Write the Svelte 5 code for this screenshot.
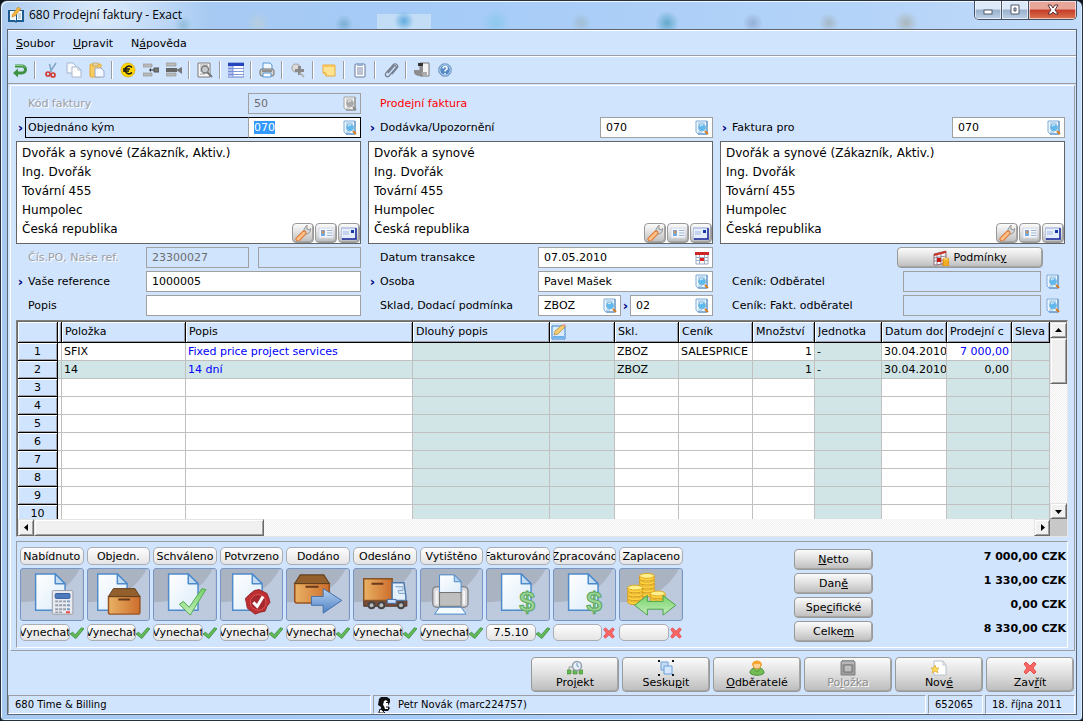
<script lang="ts">
	import { onMount } from 'svelte';

	let codeInput: HTMLInputElement;

	const menu = [
		['', 'S', 'oubor'],
		['', 'U', 'pravit'],
		['N', 'á', 'pověda']
	];

	const tools = [
		['return'],
		['cut', 'copy', 'paste'],
		['euro', 'insert', 'remove'],
		['preview'],
		['list'],
		['print'],
		['search'],
		['note'],
		['document'],
		['clip'],
		['exit', 'help']
	];

	const address = ['Ing. Dvořák', 'Tovární 455', 'Humpolec', 'Česká republika'];

	const columns = [
		{ title: 'Položka', width: 124 },
		{ title: 'Popis', width: 227 },
		{ title: 'Dlouhý popis', width: 137, shaded: true },
		{ title: '', width: 65, shaded: true, icon: true },
		{ title: 'Skl.', width: 64 },
		{ title: 'Ceník', width: 74 },
		{ title: 'Množství', width: 62, right: true },
		{ title: 'Jednotka', width: 67, shaded: true },
		{ title: 'Datum dod', width: 65 },
		{ title: 'Prodejní c', width: 65, shaded: true, right: true },
		{ title: 'Sleva', width: 0, shaded: true }
	];

	const lines = [
		['SFIX', 'Fixed price project services', '', '', 'ZBOZ', 'SALESPRICE', '1', '-', '30.04.2010', '7 000,00', ''],
		['14', '14 dní', '', '', 'ZBOZ', '', '1', '-', '30.04.2010', '0,00', '']
	];
	const rows = Array.from({ length: 10 }, (_, i) => lines[i] ?? columns.map(() => ''));

	const steps = [
		{ name: 'Nabídnuto', icon: 'calc', status: 'Vynechat', done: true },
		{ name: 'Objedn.', icon: 'order', status: 'Vynechat', done: true },
		{ name: 'Schváleno', icon: 'approve', status: 'Vynechat', done: true },
		{ name: 'Potvrzeno', icon: 'seal', status: 'Vynechat', done: true },
		{ name: 'Dodáno', icon: 'deliver', status: 'Vynechat', done: true },
		{ name: 'Odesláno', icon: 'truck', status: 'Vynechat', done: true },
		{ name: 'Vytištěno', icon: 'printer', status: 'Vynechat', done: true },
		{ name: 'Fakturováno', icon: 'money', status: '7.5.10', done: true },
		{ name: 'Zpracováno', icon: 'money', status: '', done: false },
		{ name: 'Zaplaceno', icon: 'coins', status: '', done: false }
	];

	const totals = [
		{ label: ['', 'N', 'etto'], value: '7 000,00 CZK' },
		{ label: ['Dan', 'ě', ''], value: '1 330,00 CZK' },
		{ label: ['Spe', 'c', 'ifické'], value: '0,00 CZK' },
		{ label: ['Celke', 'm', ''], value: '8 330,00 CZK' }
	];

	const actions = [
		{ label: ['Pro', 'j', 'ekt'], icon: 'project' },
		{ label: ['Sesku', 'p', 'it'], icon: 'group' },
		{ label: ['', 'O', 'dběratelé'], icon: 'customer' },
		{ label: ['Po', 'l', 'ožka'], icon: 'item', disabled: true },
		{ label: ['Nov', 'é', ''], icon: 'new' },
		{ label: ['Zav', 'ř', 'ít'], icon: 'cross' }
	];

	function isBlue(row: number, col: number) {
		return col === 1 || (row === 0 && col === 9);
	}

	onMount(() => {
		codeInput.focus();
		codeInput.select();
	});
</script>

{#snippet accel(parts: string[])}
	<span>{parts[0]}<u>{parts[1]}</u>{parts[2]}</span>
{/snippet}

{#snippet icon(name: string)}
	<svg class="icon" viewBox="0 0 16 16" aria-hidden="true">
		{#if name === 'app'}
			<path d="M0 3h7l1 1 1-1h7v12H9l-1 1-1-1H0z" fill="#1d5c8e" />
			<path d="M2 4h5l1 1v9l-1-1H2zM9 5l1-1h4v9H9z" fill="#f4f8fb" />
			<path d="M10 7h3M10 9h3M10 11h3" stroke="#9bb4c6" />
			<path d="M4 8l6-8 3 2-6 7-3 1z" fill="#f4b63f" stroke="#b97b20" stroke-width=".5" />
		{:else if name === 'return'}
			<path d="M3 4h7a3.500 3.500 0 0 1 0 7H5" fill="none" stroke="#3f9142" stroke-width="3" />
			<path d="M6 6.500v9L1 11z" fill="#3f9142" />
			<path d="M3 3.500h7a4 4 0 0 1 3 2" fill="none" stroke="#8ccf8b" />
		{:else if name === 'cut'}
			<path d="M6.500 2l2 8M13 1L7 10" stroke="#82a8c8" stroke-width="1.600" />
			<circle cx="5" cy="12" r="2" fill="none" stroke="#cf3d35" stroke-width="1.700" />
			<circle cx="10" cy="13" r="2" fill="none" stroke="#cf3d35" stroke-width="1.700" />
		{:else if name === 'copy'}
			<path d="M1 1h6l3 3v7H1z" fill="#f6f8fc" stroke="#a8b6cd" />
			<path d="M6 5h6l3 3v7H6z" fill="#fff" stroke="#a8b6cd" />
			<path d="M12 5v3h3" fill="none" stroke="#a8b6cd" />
		{:else if name === 'paste'}
			<rect x="1" y="2" width="11" height="13" rx="1" fill="#f9cb5c" stroke="#e0aa3c" />
			<rect x="4" y="1" width="5" height="3" fill="#e4d5ab" stroke="#b79a58" stroke-width=".6" />
			<path d="M6 6h6l3 3v6H6z" fill="#f5f9ff" stroke="#98a8c6" />
		{:else if name === 'euro'}
			<circle cx="8" cy="8" r="7" fill="#ffd800" stroke="#d9a400" stroke-width=".7" />
			<path d="M12 5.500C9 2.500 5 5 5 8s4 5.500 7 2.500M3 7h7M3 9h6" fill="none" stroke="#151515" stroke-width="1.500" />
		{:else if name === 'insert'}
			<path d="M0 2h9v3H0zM0 11h9v3H0z" fill="#bcbcbc" stroke="#8a8a8a" stroke-width=".6" />
			<path d="M11 6h5v4h-5z" fill="#777" stroke="#555" />
			<path d="M11 8H7" stroke="#333" /><path d="M8 6v4L6 8z" fill="#333" />
		{:else if name === 'remove'}
			<path d="M0 1h10v3H0zM0 11h10v3H0z" fill="#bcbcbc" stroke="#8a8a8a" stroke-width=".6" />
			<path d="M0 6h11v4H0z" fill="#666" /><path d="M10 8l6-3v7z" fill="#777" />
		{:else if name === 'preview'}
			<path d="M1 1h12v14H1z" fill="#f7f7f7" stroke="#7b7b7b" />
			<path d="M3 3h8M3 5h3M3 7h2M3 9h2M3 12h5" stroke="#a6a6a6" />
			<circle cx="8" cy="7.500" r="3.500" fill="#c4c9cd" stroke="#777" stroke-width="1.300" />
			<path d="M10 10l5 5" stroke="#777" stroke-width="2" />
		{:else if name === 'list'}
			<path d="M0 1h16v14H0z" fill="#fff" stroke="#647fd2" /><path d="M0 1h16v3H0z" fill="#2545c0" />
			<path d="M0 6.500h16M0 9.500h16M0 12.500h16M5 4v11" stroke="#8298dc" /><path d="M1 4h4v10H1z" fill="#6883da" opacity=".5" />
		{:else if name === 'print'}
			<path d="M4 1h7l2 2v6H4z" fill="#eff8ff" stroke="#5796d4" />
			<rect x="1" y="7" width="14" height="7" rx="2" fill="#d1d1d1" stroke="#6c6c6c" />
			<path d="M3 9h10" stroke="#4f4f4f" /><path d="M4 11h8v4H4z" fill="#f4faff" stroke="#5796d4" />
		{:else if name === 'search'}
			<circle cx="6" cy="6" r="4" fill="#dcdcdc" stroke="#b5b5b5" stroke-width="1.500" />
			<path d="M5 7h3V4h3v3h3v3h-3v3H8v-3H5z" fill="#8a8a8a" /><path d="M10 11l4 4" stroke="#b5b5b5" stroke-width="2" />
		{:else if name === 'note'}
			<path d="M2 3h12v11H5l-3-3z" fill="#ffe391" stroke="#e9ac3c" />
			<path d="M2 3h12v2H2z" fill="#fbc257" /><path d="M5 14v-3H2" fill="#fff2bd" stroke="#e3a22c" />
		{:else if name === 'document'}
			<rect x="3" y="2" width="10" height="13" rx="1" fill="#fff" stroke="#60759b" />
			<path d="M5 1v3h6V1" fill="#9aacd1" /><path d="M5 6h6M5 8h6M5 10h6M5 12h6" stroke="#7889a7" />
		{:else if name === 'clip'}
			<path d="M5 11l6-7c1-1 3 1 2 2l-7 8c-2 2-5-1-3-3l7-8c3-3 6 1 4 3l-5 6" fill="none" stroke="#767e8e" stroke-width="1.300" />
		{:else if name === 'exit'}
			<path d="M6 1h9v13H6z" fill="#f4f4f4" stroke="#777" /><path d="M0 8h6V4l3-3v13H5c-2 0-4-1-5-3z" fill="#8d8d8d" />
			<path d="M4 1h5v3H4z" fill="#333" /><path d="M8 10h5v3H8z" fill="#aaa" />
		{:else if name === 'help'}
			<circle cx="8" cy="8" r="6.500" fill="#5389c4" stroke="#8eafd1" />
			<circle cx="8" cy="8" r="5.200" fill="none" stroke="#d7e8fa" stroke-width=".8" />
			<path d="M6 6.500C6 3.500 11 4 10 7c-1 1-2 1-2 2.500M8 11v1.500" fill="none" stroke="#fff" stroke-width="1.500" />
		{:else if name === 'lookup' || name === 'lookup-off'}
			<g class:gray={name === 'lookup-off'}>
				<path d="M2 1h11v13H4l-2-2z" fill="#edf7ff" stroke="#7eabd8" /><path d="M13 1v13H4" fill="none" stroke="#5288c0" />
				<path d="M4 3h7M4 5h2M4 7h1M4 12h4" stroke="#92bee1" />
				<circle cx="8" cy="7.500" r="3.500" fill="#5fb9ed" stroke="#7fb9dd" /><path d="M6 6a3 3 0 0 1 3-1" fill="none" stroke="#fff" />
				<path d="M11 11l3 3" stroke="#d47b20" stroke-width="2" />
			</g>
		{:else if name === 'calendar'}
			<path d="M2 3h12v11H2z" fill="#fff" stroke="#9ca9c0" /><path d="M2 7.500h12M2 10.500h12M5.500 5v9M10.500 5v9" stroke="#9eabc2" />
			<path d="M1 2h14v3H1z" fill="#cb2727" /><path d="M6 8h4v3H6z" fill="#e31f1f" />
		{:else if name === 'terms'}
			<path d="M1 4l12-3v12l-9 2H1z" fill="#f9f9f9" stroke="#8b6874" /><path d="M1 8l12-2M1 11l12-1M4 4v11M8 3v11" stroke="#8e8090" />
			<path d="M1 4l12-3v2L1 6z" fill="#cf3124" /><path d="M4 8h4v4H4z" fill="#c61717" />
			<path d="M10 9h6v7h-6z" fill="#ffca28" stroke="#d77c13" /><ellipse cx="13" cy="9" rx="3" ry="1" fill="#fff082" stroke="#d77c13" stroke-width=".5" />
			<path d="M10 12h6M10 14h6" stroke="#d77c13" stroke-width=".7" />
		{:else if name === 'wrench'}
			<path d="M9 8V4l3-4v4l3 1 1-2c0 4-2 6-5 6z" fill="#d4d4d4" stroke="#888" stroke-width=".8" />
			<path d="M9 8L3 14" stroke="#d77836" stroke-width="5" stroke-linecap="round" /><path d="M9 8L3 14" stroke="#ffbf87" stroke-width="3" stroke-linecap="round" />
		{:else if name === 'card'}
			<rect x="1" y="3" width="14" height="10" fill="#f4f7fc" stroke="#d3d9e4" /><path d="M3 5h4v6H3z" fill="#74a7df" />
			<circle cx="5" cy="7" r="1.500" fill="#d39155" /><path d="M9 5.500h5M9 8h5M9 10.500h5" stroke="#9db3d0" />
		{:else if name === 'mail'}
			<path d="M0 3h15v11H0z" fill="#e4edfc" stroke="#96aad5" /><path d="M15 3v11H1" fill="none" stroke="#1b2b99" stroke-width="1.500" />
			<path d="M10 5h3v3h-3z" fill="#1636b8" /><path d="M2 7h6M2 9h6" stroke="#a5b9df" />
		{:else if name === 'edit'}
			<path d="M1 2h13v13H1z" fill="#d9ecff" stroke="#3f83ca" /><path d="M2 12h11v2H2z" fill="#68b2eb" />
			<path d="M3 11l1-4 7-6 3 2-7 7z" fill="#f8cb6c" stroke="#a48a4a" stroke-width=".7" /><path d="M11 1l3 2 1-2-2-1z" fill="#ec9e8b" />
		{:else if name === 'check'}
			<path d="M0 9l3-2 3 3 7-8 3 1-9 11H6z" fill="#62bb55" stroke="#318232" stroke-width=".8" />
		{:else if name === 'cross'}
			<path d="M2 4l2-2 4 4 4-4 2 2-3 4 3 4-2 2-4-4-4 4-2-2 3-4z" fill="#fa6765" stroke="#dc3838" stroke-width=".8" />
		{:else if name === 'project'}
			<path d="M2 11V7h6v4M8 5v6" fill="none" stroke="#8d9a91" /><path d="M0 10h4v4H0zM6 10h4v4H6zM12 10h4v4h-4z" fill="#63b94f" stroke="#438832" stroke-width=".6" />
			<circle cx="10" cy="6" r="4.500" fill="#e5f0fa" stroke="#929daa" stroke-width="1.500" /><path d="M10 3v3l2 1" fill="none" stroke="#6e94b4" />
		{:else if name === 'group'}
			<path d="M3 2h7v8H3z" fill="#c7ddf7" stroke="#6a9fd9" /><path d="M6 6h8v8H6z" fill="#d4e7ff" stroke="#6a9fd9" />
			<path d="M0 0h2v2H0zM14 0h2v2h-2zM0 14h2v2H0zM14 14h2v2h-2z" fill="#111" />
		{:else if name === 'customer'}
			<path d="M1 13c0-4 3-5 7-5s7 1 7 5c-2 3-12 3-14 0z" fill="#75bd55" stroke="#488d37" />
			<circle cx="8" cy="5" r="4" fill="#ffd194" stroke="#dd9633" /><path d="M3 6C2-1 14-1 13 6l-2-2H5z" fill="#f7a52e" /><path d="M5 10l3 2 3-2" stroke="#5a9e43" fill="none" />
		{:else if name === 'item'}
			<path d="M1 2l2-2h10l2 2v13H1z" fill="#8c8c8c" stroke="#686868" /><path d="M4 5h8v7H4z" fill="#b5b5b5" stroke="#555" /><path d="M2 3h12" stroke="#c5c5c5" />
		{:else if name === 'new'}
			<path d="M3 1h9l3 4v10H3z" fill="#fff" stroke="#bac1cc" /><path d="M12 1v4h3" fill="none" stroke="#bac1cc" />
			<path d="M4 5l1 3h3l-2 2 1 3-3-2-3 2 1-3-2-2h3z" fill="#ffdc59" stroke="#dfa92a" stroke-width=".7" />
		{:else if name === 'person'}
			<path d="M3 2l2-2h6l3 2v3l-1 2v3l1 1-2 3H5v-4L2 8z" fill="#111" />
			<path d="M8 4l2-1 2 2v2l1 2-1 1v2H9l-1-3-1-1z" fill="#fff" />
			<path d="M10 5.500h2M10 10h2" stroke="#111" />
			<path d="M3 15l1-3 2 1 3 3H3z" fill="#fff" stroke="#111" />
		{/if}
	</svg>
{/snippet}

{#snippet page(x = 15)}
	<path d="M{x} 5h20l10 10v27H{x}z" fill="url(#paper)" stroke="#4d8bca" stroke-width="1.500" />
	<path d="M{x + 20} 5v10h10z" fill="#c3dcf3" stroke="#4d8bca" stroke-width="1.500" stroke-linejoin="round" />
{/snippet}

{#snippet box()}
	<path d="M0 8h32v16q0 2-2 2H2q-2 0-2-2z" fill="url(#carton)" stroke="#985424" stroke-width="1.500" />
	<path d="M5 0h22l5 8H0z" fill="#93602d" stroke="#65401f" /><path d="M10 11h12" stroke="#65391b" stroke-width="2" />
{/snippet}

{#snippet stack(x: number, y: number, count: number)}
	{#each Array(count) as _, i}
		<path d="M{x} {y + (count - i) * 4 - 4}v3c0 3 15 3 15 0v-3" fill="#ffd342" stroke="#d49a1a" />
		<ellipse cx={x + 7.5} cy={y + (count - i) * 4 - 4} rx="7.500" ry="2.500" fill="#fff08d" stroke="#dda91e" />
	{/each}
{/snippet}

{#snippet picture(name: string)}
	<svg class="picture" viewBox="0 0 63 52" preserveAspectRatio="xMidYMid slice" aria-hidden="true">
		<path d="M0 52V34c28-1 48-12 60-34h3v52z" fill="#bdc9dd" />
		{#if name === 'calc'}
			{@render page()}
			<rect x="32" y="22" width="21" height="24" rx="1" fill="#e7eaf0" stroke="#9a9da5" />
			<rect x="35" y="25" width="15" height="5" rx="1" fill="#4d79bd" stroke="#355d9e" />
			{#each [33, 37, 41] as y}
				<path d="M35 {y}h3M39 {y}h3M43 {y}h3" stroke="#999eaa" stroke-width="2" /><path d="M47 {y}h3" stroke="#7b97b9" stroke-width="2" />
			{/each}
			<path d="M35 44h3M39 44h3" stroke="#999eaa" stroke-width="1.500" /><path d="M46 44h4" stroke="#eb4a48" stroke-width="2" />
		{:else if name === 'order'}
			{@render page(10)}
			<g transform="translate(21 20)">{@render box()}</g>
		{:else if name === 'approve'}
			{@render page()}
			<path d="M26 36l4-3 6 6 13-19 4 1-16 26z" fill="url(#leaf)" stroke="#51a950" />
		{:else if name === 'seal'}
			{@render page(12)}
			<path d="M34 22l5-1 4 2 4 2 2 5 1 4-3 4-2 5-5 1-5 2-4-3-4-3-1-5-1-5 4-4z" fill="#bd2f32" stroke="#97262d" />
			<circle cx="38" cy="34" r="8" fill="#a62930" stroke="#d85653" /><path d="M33 34l4 4 6-10" fill="none" stroke="#fff" stroke-width="3" />
		{:else if name === 'deliver'}
			<g transform="translate(8 6) scale(1.1)">{@render box()}</g>
			<path d="M25 28h12v-8l19 12-19 13v-8H25z" fill="url(#arrow)" stroke="#4370a9" />
		{:else if name === 'truck'}
			<path d="M10 32h44v6H10z" fill="#754c39" stroke="#52392e" />
			<path d="M10 10h29v22H10z" fill="url(#carton)" stroke="#865424" stroke-width="1.500" /><path d="M18 15h12" stroke="#693a1c" stroke-width="2" />
			<path d="M39 14h12l2 14v4H39z" fill="#e4f0fb" stroke="#4f79aa" stroke-width="1.500" /><path d="M42 18h8v4h-5l1 3h6" fill="#d4e4f5" stroke="#86a7c9" />
			<path d="M34 31h9v4h-9z" fill="#cadfff" stroke="#416ba8" />
			{#each [18, 28, 48] as x}
				<circle cx={x} cy="37" r="4" fill="#454545" /><circle cx={x} cy="37" r="2" fill="#bbb" />
			{/each}
		{:else if name === 'printer'}
			<rect x="12" y="18" width="36" height="21" rx="4" fill="#d9d9db" stroke="#85878d" stroke-width="1.500" />
			<path d="M19 6h15l7 7v11H19z" fill="url(#paper)" stroke="#4d8bca" /><path d="M34 6v7h7z" fill="#b5d2f1" stroke="#4d8bca" />
			<rect x="19" y="24" width="22" height="14" fill="#bfbfc0" stroke="#737373" />
			<path d="M16 22v14M44 22v14" stroke="#f6f6f6" stroke-width="2" />
			<path d="M19 39h22l5 7H14z" fill="#f4fbff" stroke="#4d8bca" />
		{:else if name === 'money'}
			{@render page()}
			<text class="dollar" x="33" y="43">$</text>
		{:else if name === 'coins'}
			{@render stack(20, 7, 5)}
			{@render stack(8, 19, 4)}
			{@render stack(31, 25, 2)}
			<path d="M15 37l13-10v6h16v-6l13 10-13 10v-6H28v6z" fill="url(#leaf)" stroke="#4ba14d" />
		{/if}
	</svg>
{/snippet}

{#snippet party(first: string)}
	<div class="address">
		<p>{first}</p>
		{#each address as line}
			<p>{line}</p>
		{/each}
		<div class="address-tools">
			<button aria-label="Nastavení">{@render icon('wrench')}</button>
			<button aria-label="Karta">{@render icon('card')}</button>
			<button aria-label="E-mail">{@render icon('mail')}</button>
		</div>
	</div>
{/snippet}

<svg class="defs" aria-hidden="true">
	<linearGradient id="paper" x2="1" y2="1"><stop stop-color="#fff" /><stop offset="1" stop-color="#dcecfa" /></linearGradient>
	<linearGradient id="carton"><stop stop-color="#e9b264" /><stop offset="1" stop-color="#cd6d2c" /></linearGradient>
	<linearGradient id="leaf" x2="0" y2="1"><stop stop-color="#76d368" /><stop offset="1" stop-color="#c4edbb" /></linearGradient>
	<linearGradient id="arrow" x2="0" y2="1"><stop stop-color="#b7d2f2" /><stop offset="1" stop-color="#4f83c5" /></linearGradient>
</svg>

<div class="window">
	<header class="titlebar">
		{@render icon('app')}
		<h1>680 Prodejní faktury - Exact</h1>
		<div class="window-buttons">
			<button aria-label="Minimalizovat"><svg viewBox="0 0 14 12"><rect x="3" y="6" width="8" height="4" fill="#fff" stroke="#515b6c" /></svg></button>
			<button aria-label="Maximalizovat"><svg viewBox="0 0 14 12"><path d="M3 1h8v9H3zM6 4v3h2V4z" fill="#fff" fill-rule="evenodd" stroke="#515b6c" /></svg></button>
			<button class="close" aria-label="Zavřít okno"><svg viewBox="0 0 14 12"><path d="M2 1h3l2 3 2-3h3L9 6l3 4H9L7 8l-2 2H2l3-4z" fill="#fff" stroke="#5b3138" /></svg></button>
		</div>
	</header>

	<main>
		<nav>
			{#each menu as item}
				<button>{@render accel(item)}</button>
			{/each}
		</nav>

		<div class="toolbar">
			{#each tools as group}
				<div class="tool-group">
					{#each group as tool}
						<button aria-label={tool}>{@render icon(tool)}</button>
					{/each}
				</div>
			{/each}
		</div>

		<section class="panel">
			<div class="form">
				<div class="column">
					<div class="row">
						<label class="off" for="code">Kód faktury</label>
						<div class="field lookup disabled"><input id="code" value="50" disabled />{@render icon('lookup-off')}</div>
					</div>
					<div class="row marked focused">
						<label for="ordered-by">Objednáno kým</label>
						<div class="field lookup"><input id="ordered-by" value="070" bind:this={codeInput} />{@render icon('lookup')}</div>
					</div>
					{@render party('Dvořák a synové (Zákazník, Aktiv.)')}
					<div class="row">
						<label class="off" for="po">Čís.PO, Naše ref.</label>
						<div class="fields reference pair">
							<div class="field disabled"><input id="po" value="23300027" disabled /></div>
							<div class="field disabled"><input aria-label="Naše ref." disabled /></div>
						</div>
					</div>
					<div class="row marked">
						<label for="your-ref">Vaše reference</label>
						<div class="field reference"><input id="your-ref" value="1000005" /></div>
					</div>
					<div class="row">
						<label for="description">Popis</label>
						<div class="field reference"><input id="description" /></div>
					</div>
				</div>

				<div class="column">
					<div class="row"><strong>Prodejní faktura</strong></div>
					<div class="row marked">
						<label for="deliver-to">Dodávka/Upozornění</label>
						<div class="field lookup"><input id="deliver-to" value="070" />{@render icon('lookup')}</div>
					</div>
					{@render party('Dvořák a synové')}
					<div class="row">
						<label for="date">Datum transakce</label>
						<div class="field detail"><input id="date" value="07.05.2010" />{@render icon('calendar')}</div>
					</div>
					<div class="row marked">
						<label for="person">Osoba</label>
						<div class="field detail"><input id="person" value="Pavel Mašek" />{@render icon('lookup')}</div>
					</div>
					<div class="row">
						<label for="warehouse">Sklad, Dodací podmínka</label>
						<div class="fields detail">
							<div class="field"><input id="warehouse" value="ZBOZ" />{@render icon('lookup')}</div>
							<span class="marker">›</span>
							<div class="field"><input aria-label="Dodací podmínka" value="02" />{@render icon('lookup')}</div>
						</div>
					</div>
				</div>

				<div class="column">
					<div class="row"></div>
					<div class="row marked">
						<label for="invoice-to">Faktura pro</label>
						<div class="field lookup"><input id="invoice-to" value="070" />{@render icon('lookup')}</div>
					</div>
					{@render party('Dvořák a synové (Zákazník, Aktiv.)')}
					<div class="row">
						<button class="raised terms">{@render icon('terms')}{@render accel(['Podmínk', 'y', ''])}</button>
					</div>
					<div class="row">
						<label for="price-customer">Ceník: Odběratel</label>
						<div class="field price disabled"><input id="price-customer" disabled /></div>
						<button class="find" aria-label="Hledat ceník odběratele">{@render icon('lookup')}</button>
					</div>
					<div class="row">
						<label for="price-invoice">Ceník: Fakt. odběratel</label>
						<div class="field price disabled"><input id="price-invoice" disabled /></div>
						<button class="find" aria-label="Hledat ceník fakt. odběratele">{@render icon('lookup')}</button>
					</div>
				</div>
			</div>

			<div class="sheet">
				<div class="sheet-view">
					<table>
						<colgroup>
							<col style="width: 40px" />
							<col style="width: 4px" />
							{#each columns as col}
								<col style={col.width ? `width: ${col.width}px` : ''} />
							{/each}
						</colgroup>
						<thead>
							<tr>
								<th></th>
								<th class="narrow"></th>
								{#each columns as col}
									<th class:with-icon={col.icon}>
										{#if col.icon}
											{@render icon('edit')}
										{:else}
											<div class="title">{col.title}</div>
										{/if}
									</th>
								{/each}
							</tr>
						</thead>
						<tbody>
							{#each rows as row, r}
								<tr class:shaded={r === 1}>
									<th scope="row">{r + 1}</th>
									<td class="narrow"></td>
									{#each row as cell, c}
										<td
											class:shaded={columns[c].shaded && !(r === 0 && c === 9)}
											class:right={columns[c].right}
											class:blue={isBlue(r, c)}>{cell}</td>
									{/each}
								</tr>
							{/each}
						</tbody>
					</table>
				</div>
				<div class="scroll vertical">
					<button aria-label="Nahoru"><svg viewBox="0 0 7 7"><path d="M0 5h7L3.500 1z" /></svg></button>
					<div class="thumb"></div>
					<button class="last" aria-label="Dolů"><svg viewBox="0 0 7 7"><path d="M0 2h7L3.500 6z" /></svg></button>
				</div>
				<div class="scroll horizontal">
					<button aria-label="Vlevo"><svg viewBox="0 0 7 7"><path d="M5 0v7L1 3.500z" /></svg></button>
					<div class="thumb"></div>
					<button class="last" aria-label="Vpravo"><svg viewBox="0 0 7 7"><path d="M2 0v7l4-3.500z" /></svg></button>
				</div>
				<div class="corner"></div>
			</div>

			<div class="summary">
				<div class="steps">
					{#each steps as step}
						<div class="step">
							<button class="pill"><span>{step.name}</span></button>
							<button class="tile" aria-label={step.name}>{@render picture(step.icon)}</button>
							<div class="status">
								<button class="pill" aria-label="{step.name} stav"><span>{step.status}</span></button>
								{@render icon(step.done ? 'check' : 'cross')}
							</div>
						</div>
					{/each}
				</div>
				<div class="totals">
					{#each totals as total}
						<div class="total">
							<button class="raised">{@render accel(total.label)}</button>
							<b>{total.value}</b>
						</div>
					{/each}
				</div>
			</div>
		</section>

		<div class="actions">
			{#each actions as action}
				<button class="raised" disabled={action.disabled}>
					{@render icon(action.icon)}
					{@render accel(action.label)}
				</button>
			{/each}
		</div>

		<footer>
			<div class="product">680 Time &amp; Billing</div>
			<div class="user">{@render icon('person')}Petr Novák (marc224757)</div>
			<div class="number">652065</div>
			<div class="date">18. října 2011</div>
		</footer>
	</main>
</div>

<style>
	:global(body) {
		margin: 0;
		background: #10151f;
	}

	.window,
	button,
	input {
		font-family: Verdana, 'DejaVu Sans', sans-serif;
		font-size: 11px;
		color: #000;
	}

	.window {
		box-sizing: border-box;
		height: 100vh;
		min-height: 600px;
		display: flex;
		flex-direction: column;
		padding: 0 5px 5px 6px;
		border: 1px solid #26303f;
		border-radius: 7px 7px 4px 4px;
		background:
			radial-gradient(ellipse at 100px 14px, #e9f3ffcc, transparent 110px),
			radial-gradient(circle at 182px 24px, #4c91a877, transparent 9px),
			radial-gradient(circle at 257px 22px, #c5d0ce88, transparent 12px),
			radial-gradient(circle at 343px 23px, #4c91a877, transparent 9px),
			radial-gradient(circle at 403px 20px, #60acdf, transparent 10px),
			linear-gradient(#d3e6f7aa, #d3e6f7aa) 376px 13px / 54px 16px no-repeat,
			radial-gradient(circle at 495px 21px, #8cc8ed, transparent 14px),
			radial-gradient(circle at 580px 22px, #a3bdd4, transparent 10px),
			radial-gradient(circle at 666px 22px, #499bbbbb, transparent 12px),
			radial-gradient(circle at 752px 22px, #8298bb99, transparent 10px),
			radial-gradient(circle at 828px 22px, #9ca8a499, transparent 10px),
			radial-gradient(circle at 905px 22px, #a5a99eaa, transparent 12px),
			linear-gradient(90deg, #a8c9ef, #a5cbf7 40%, #b4d3f8 80%, #c2dcfa);
		box-shadow: inset 1px 1px #f2f8ff, inset -1px -1px #dceeff;
	}

	button {
		box-sizing: border-box;
		display: flex;
		align-items: center;
		justify-content: center;
		padding: 0;
		border: 0;
		background: none;
		white-space: nowrap;
	}

	.icon {
		flex: none;
		width: 16px;
		height: 16px;
	}

	.gray {
		filter: grayscale(1);
	}

	.defs {
		position: absolute;
		width: 0;
		height: 0;
	}

	.titlebar {
		flex: none;
		height: 28px;
		display: flex;
		align-items: center;
		gap: 5px;
		padding-left: 1px;
	}

	h1 {
		flex: 1;
		margin: 0;
		font: 12px/16px 'Segoe UI', 'Open Sans', sans-serif;
	}

	.window-buttons {
		align-self: flex-start;
		display: flex;
		border: 1px solid #445067;
		border-top: 0;
		border-radius: 0 0 5px 5px;
		overflow: hidden;
	}

	.window-buttons button {
		width: 27px;
		height: 18px;
		border-right: 1px solid #445067;
		background: linear-gradient(#dce9f8 45%, #99afcb 50%, #bed1e8);
		box-shadow: inset 0 0 0 1px #ffffff99;
	}

	.window-buttons .close {
		width: 47px;
		border: 0;
		background: linear-gradient(#e7a698 45%, #c53c27 50%, #dc7450);
	}

	.window-buttons svg {
		width: 14px;
		height: 12px;
	}

	main {
		flex: 1;
		min-height: 0;
		display: flex;
		flex-direction: column;
		border: 1px solid #5d6673;
		background: #d1e4fe;
	}

	nav {
		flex: none;
		display: flex;
		gap: 18px;
		height: 24px;
		padding: 0 8px;
		border-top: 1px solid #fff;
		border-bottom: 1px solid #9a9da3;
	}

	.toolbar {
		flex: none;
		display: flex;
		height: 26px;
		border-top: 1px solid #fff;
		border-bottom: 1px solid #9a9da3;
	}

	.tool-group {
		display: flex;
		align-items: center;
	}

	.tool-group button {
		width: 23px;
		height: 24px;
	}

	.tool-group + .tool-group::before {
		content: '';
		height: 18px;
		margin: 0 3px;
		border-left: 1px solid #9a9da3;
		border-right: 1px solid #fff;
	}

	.panel {
		flex: 1;
		min-height: 0;
		display: flex;
		flex-direction: column;
		gap: 4px;
		margin: 1px 1px 0 2px;
		padding: 7px 6px 2px 5px;
		border: 1px solid #fff;
		border-right-color: #9a9da3;
		border-bottom-color: #9a9da3;
	}

	.form {
		display: grid;
		grid-template-columns: repeat(3, minmax(0, 1fr));
		gap: 7px;
		padding-right: 3px;
	}

	.column {
		display: flex;
		flex-direction: column;
		gap: 3px;
	}

	.row {
		box-sizing: border-box;
		height: 21px;
		display: flex;
		align-items: center;
		justify-content: space-between;
		padding-left: 12px;
	}

	.marked {
		padding-left: 0;
	}

	.marked::before,
	.marker {
		content: '›';
		width: 9px;
		flex: none;
		font-size: 13px;
		font-weight: bold;
		line-height: 16px;
		color: #000080;
		text-align: center;
	}

	.marked label {
		flex: 1;
		padding-left: 3px;
	}

	label {
		white-space: nowrap;
	}

	.off {
		color: #9d9fa3;
		text-shadow: 1px 1px #fff;
	}

	.row strong {
		font-weight: normal;
		color: #f00;
	}

	.field {
		box-sizing: border-box;
		flex: none;
		height: 21px;
		display: flex;
		align-items: center;
		padding-right: 2px;
		border: 1px solid #a0a0a0;
		background: #fff;
	}

	.field input {
		flex: 1;
		min-width: 0;
		height: 19px;
		box-sizing: border-box;
		padding: 0 0 0 5px;
		border: 0;
		outline: 0;
		background: none;
	}

	.field input::selection {
		background: #3399ff;
		color: #fff;
	}

	.disabled {
		background: none;
	}

	.disabled input {
		color: #6d6d6d;
	}

	.lookup {
		width: 113px;
	}

	.reference {
		width: 215px;
	}

	.detail {
		width: 175px;
	}

	.price {
		width: 138px;
	}

	.column .row:has(.price) label {
		flex: 1;
	}

	.fields {
		display: flex;
		align-items: center;
	}

	.fields .field {
		flex: 1;
		width: 0;
	}

	.pair {
		gap: 9px;
	}

	.focused label {
		box-sizing: border-box;
		height: 21px;
		line-height: 19px;
		padding-left: 2px;
		border: 1px solid #000;
		border-right: 0;
	}

	.focused .field {
		border-color: #000;
		border-left-color: #a0a0a0;
	}

	.terms {
		gap: 4px;
		width: 146px;
		height: 21px;
		margin: 0 22px 0 auto;
	}

	.find {
		margin: 0 4px;
	}

	.address {
		position: relative;
		box-sizing: border-box;
		padding: 2px 5px 4px;
		border: 1px solid #646464;
		background: #fff;
		font-size: 12px;
	}

	.address p {
		margin: 0;
		line-height: 19px;
	}

	.address-tools {
		position: absolute;
		right: 0;
		bottom: 0;
		display: flex;
		gap: 1px;
	}

	.address-tools button {
		width: 22px;
		height: 20px;
	}

	.address-tools button,
	.raised {
		border: 1px solid #9a9a9a;
		border-radius: 4px;
		background: linear-gradient(#fbfbfb, #dedede 50%, #bcbcbc);
		box-shadow: inset -1px -1px #a5a5a5;
	}

	.sheet {
		flex: 1;
		min-height: 100px;
		display: grid;
		grid-template: minmax(0, 1fr) 17px / minmax(0, 1fr) 17px;
		border: 1px solid #808080;
		border-right-color: #e6e6e6;
		border-bottom-color: #e6e6e6;
		box-shadow: inset 1px 1px #696969;
		padding: 1px 0 0 1px;
		background: #fff;
	}

	.sheet-view {
		overflow: hidden;
	}

	table {
		width: 100%;
		table-layout: fixed;
		border-collapse: separate;
		border-spacing: 0;
	}

	th,
	td {
		box-sizing: border-box;
		height: 18px;
		padding: 0 2px;
		border: 0 solid #c0c0c0;
		border-width: 0 1px 1px 0;
		line-height: 16px;
		font-weight: normal;
		text-align: left;
		white-space: nowrap;
		overflow: hidden;
	}

	th {
		border-color: #000;
		background: #d1e4fe;
		box-shadow: inset 1px 1px #fff, inset -1px -1px #9a9da3;
	}

	thead th {
		height: 21px;
		padding: 0 3px;
	}

	.title {
		overflow: hidden;
	}

	tbody th {
		text-align: center;
	}

	.narrow {
		padding: 0;
	}

	.with-icon {
		padding: 0 1px;
	}

	.with-icon .icon {
		display: block;
	}

	.shaded,
	.shaded td {
		background: #d1e5e6;
	}

	td.right {
		text-align: right;
	}

	td.blue {
		color: #00f;
	}

	.scroll {
		display: flex;
		background: repeating-conic-gradient(#fff 0 25%, #eee 0 50%) 0 0 / 2px 2px;
	}

	.vertical {
		flex-direction: column;
	}

	.horizontal {
		grid-row: 2;
	}

	.scroll button,
	.thumb {
		box-sizing: border-box;
		flex: none;
		width: 17px;
		height: 16px;
		border: 1px solid;
		border-color: #e3e3e3 #696969 #696969 #e3e3e3;
		background: #f0f0f0;
		box-shadow: inset 1px 1px #fff, inset -1px -1px #a0a0a0;
	}

	.horizontal button {
		height: 17px;
		width: 16px;
	}

	.vertical .thumb {
		height: 46px;
	}

	.horizontal .thumb {
		width: 230px;
		height: 17px;
	}

	.vertical .last {
		margin-top: auto;
	}

	.horizontal .last {
		margin-left: auto;
	}

	.scroll svg {
		width: 7px;
		height: 7px;
	}

	.corner {
		background: #c8c8c8;
	}

	.summary {
		flex: none;
		display: grid;
		grid-template-columns: 663px 79px minmax(0, 1fr);
		column-gap: 111px;
		padding: 5px 1px 5px 3px;
		border: 1px solid #9a9da3;
		border-right-color: #fff;
		border-bottom-color: #fff;
	}

	.steps {
		display: grid;
		grid-template-columns: repeat(10, minmax(0, 1fr));
		gap: 3px;
	}

	.step {
		display: flex;
		flex-direction: column;
		gap: 3px;
	}

	.pill {
		width: 100%;
		height: 18px;
		border: 1px solid #a9adb3;
		border-radius: 5px;
		background: linear-gradient(#fdfdfd, #e4e4e4);
		overflow: hidden;
	}

	.tile {
		width: 100%;
		height: 53px;
		border: 1px solid #7895c3;
		border-radius: 3px;
		background: #aab3c1;
		overflow: hidden;
	}

	.picture {
		width: 100%;
		height: 100%;
	}

	.dollar {
		font: bold 29px 'Liberation Sans', sans-serif;
		fill: #9bd394;
		stroke: #56a55c;
	}

	.status {
		display: flex;
		align-items: center;
	}

	.status .pill {
		width: 50px;
		height: 17px;
	}

	.status .icon {
		width: 14px;
		height: 14px;
	}

	.totals {
		grid-column: 2 / 4;
		display: flex;
		flex-direction: column;
		gap: 3px;
		padding-top: 2px;
	}

	.total {
		display: flex;
		justify-content: space-between;
	}

	.total .raised {
		width: 79px;
		height: 21px;
	}

	.total b {
		line-height: 16px;
	}

	.actions {
		flex: none;
		display: flex;
		justify-content: flex-end;
		gap: 3px;
		padding: 6px 2px 3px;
	}

	.actions .raised {
		flex-direction: column;
		width: 88px;
		height: 35px;
	}

	.actions .raised:disabled {
		color: #8d8d8d;
		text-shadow: 1px 1px #fff;
	}

	.raised:disabled .icon {
		opacity: 0.8;
	}

	footer {
		flex: none;
		display: flex;
		gap: 2px;
		padding-right: 1px;
	}

	footer div {
		box-sizing: border-box;
		display: flex;
		align-items: center;
		height: 19px;
		padding: 0 6px;
		border: 1px solid #9a9da3;
		border-right-color: #fff;
		border-bottom-color: #fff;
		font-size: 10px;
	}

	.product {
		width: 363px;
	}

	.user {
		flex: 1;
		gap: 6px;
		padding: 0 2px;
	}

	.number {
		width: 55px;
	}

	.date {
		width: 90px;
	}
</style>
